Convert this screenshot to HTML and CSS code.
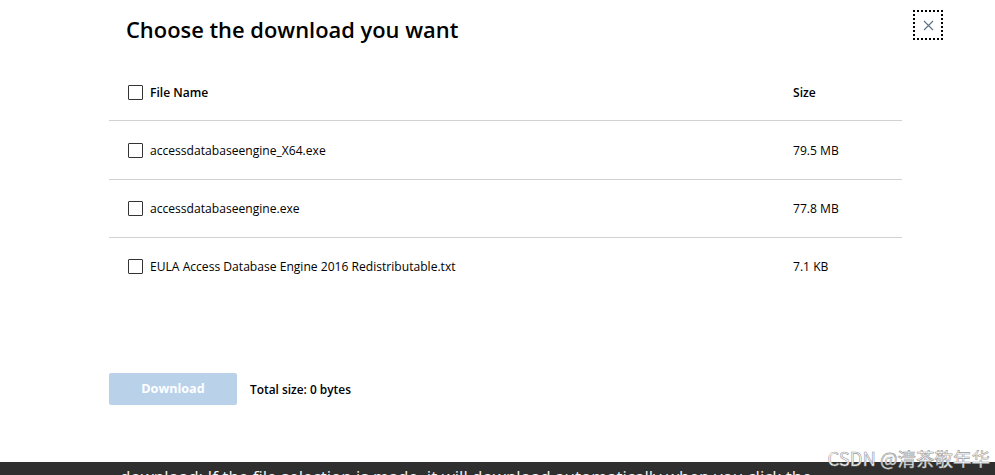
FILE: index.html
```html
<!DOCTYPE html>
<html>
<head>
<meta charset="utf-8">
<link rel="stylesheet" href="styles.css">
</head>
<body>
<div class="page">
  <div class="dialog">
    <div class="top">
      <h1 class="title">Choose the download you want</h1>
      <button class="close" aria-label="Close">
        <svg width="11" height="11" viewBox="0 0 11 11"><path d="M1 1 L10 10 M10 1 L1 10" stroke="#5b6f8a" stroke-width="1.1" fill="none"/></svg>
      </button>
    </div>
    <div class="table">
      <div class="row head">
        <div class="name"><span class="cb"></span><span>File Name</span></div>
        <div class="size">Size</div>
      </div>
      <div class="row r1">
        <div class="name"><span class="cb"></span><span>accessdatabaseengine_X64.exe</span></div>
        <div class="size">79.5 MB</div>
      </div>
      <div class="row r2">
        <div class="name"><span class="cb"></span><span>accessdatabaseengine.exe</span></div>
        <div class="size">77.8 MB</div>
      </div>
      <div class="row last">
        <div class="name"><span class="cb"></span><span>EULA Access Database Engine 2016 Redistributable.txt</span></div>
        <div class="size">7.1 KB</div>
      </div>
    </div>
    <div class="actions">
      <button class="download" disabled>Download</button>
      <span class="total">Total size: 0 bytes</span>
    </div>
  </div>
  <div class="footer">
    <div class="footer-text">download: If the file selection is made, it will download automatically when you click the link to the right</div>
    <div class="watermark">CSDN @清茶敬年华</div>
  </div>
</div>
</body>
</html>
```

FILE: styles.css
```css
html, body {
  margin: 0;
  padding: 0;
  background: #fff;
}
body {
  font-family: "Open Sans", "Noto Sans", sans-serif;
  color: #000;
  width: 995px;
  height: 475px;
  overflow: hidden;
}
.page {
  position: relative;
  height: 475px;
}
.dialog {
  margin-left: 109px;
  width: 793px;
}
.top {
  height: 64px;
  position: relative;
}
.title {
  margin: 0;
  padding: 15px 0 0 17px;
  font-size: 21.9px;
  font-weight: 600;
  line-height: 30px;
  letter-spacing: 0;
}
.close {
  position: absolute;
  left: 804px;
  top: 10px;
  width: 30px;
  height: 30px;
  border: 2px dotted #000;
  background: #fff;
  padding: 0;
  display: flex;
  align-items: center;
  justify-content: center;
}
.row {
  display: flex;
  align-items: center;
  height: 57px;
  border-bottom: 1px solid #d2d2d2;
  font-size: 12.1px;
}
.row.head {
  height: 56px;
  font-weight: 600;
}
.row.r1 {
  height: 58px;
}
.row.last {
  border-bottom: none;
}
.name {
  display: flex;
  align-items: center;
  gap: 7px;
  width: 684px;
  padding-left: 19px;
  box-sizing: border-box;
}
.cb {
  width: 13px;
  height: 13px;
  border: 1.5px solid #333;
  border-radius: 1px;
  display: inline-block;
  flex: none;
}
.size {
  flex: 1;
}
.actions {
  display: flex;
  align-items: center;
  gap: 13px;
  margin-top: 78px;
}
.download {
  width: 128px;
  height: 32px;
  border: none;
  border-radius: 2px;
  background: #b9d2ea;
  color: #fff;
  font-family: inherit;
  font-size: 12.6px;
  font-weight: 700;
  padding: 0 0 2px 0;
}
.total {
  font-size: 11.9px;
  font-weight: 600;
}
.footer {
  position: absolute;
  left: 0;
  right: 0;
  top: 462px;
  height: 13px;
  background: #2f2f2f;
}
.footer-text {
  height: 10px;
  width: 690px;
  overflow: hidden;
  color: #f2f2f2;
  font-size: 17px;
  line-height: 23px;
  margin-top: 3px;
  padding-left: 120px;
  white-space: nowrap;
}
.watermark {
  position: absolute;
  right: 5px;
  top: -17px;
  font-family: "Noto Sans CJK SC", sans-serif;
  font-size: 18.5px;
  color: #fff;
  -webkit-text-stroke: 0.6px #9a9a9a;
  letter-spacing: 0;
}
```
